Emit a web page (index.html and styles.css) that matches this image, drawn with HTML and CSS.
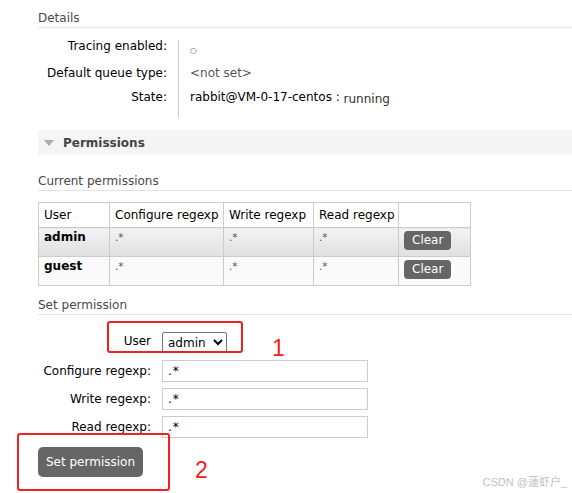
FILE: index.html
```html
<!DOCTYPE html>
<html>
<head>
<meta charset="utf-8">
<link rel="stylesheet" href="styles.css">
</head>
<body>
<div class="page">
  <h3 class="sec">Details</h3>
  <table class="details">
    <tr class="r1"><th>Tracing enabled:</th><td><span class="circle">○</span></td></tr>
    <tr class="r2"><th>Default queue type:</th><td><span class="muted">&lt;not set&gt;</span></td></tr>
    <tr class="r3"><th>State:</th><td>rabbit@VM-0-17-centos : <span class="running">running</span></td></tr>
  </table>

  <div class="bar"><span class="tri"></span><span class="bar-title">Permissions</span></div>

  <h3 class="sec sec2">Current permissions</h3>
  <table class="perms">
    <colgroup><col class="c1"><col class="c2"><col class="c3"><col class="c4"><col class="c5"></colgroup>
    <tr class="hd"><th>User</th><th>Configure regexp</th><th>Write regexp</th><th>Read regexp</th><th></th></tr>
    <tr class="odd"><td class="user">admin</td><td class="rx">.*</td><td class="rx">.*</td><td class="rx">.*</td><td><span class="btn-sm">Clear</span></td></tr>
    <tr class="even"><td class="user">guest</td><td class="rx">.*</td><td class="rx">.*</td><td class="rx">.*</td><td><span class="btn-sm">Clear</span></td></tr>
  </table>

  <h3 class="sec sec3">Set permission</h3>
  <div class="form">
    <div class="row row-user"><label>User</label><select class="sel"><option>admin</option><option>guest</option></select></div>
    <div class="row"><label>Configure regexp:</label><input class="inp" value=".*"></div>
    <div class="row"><label>Write regexp:</label><input class="inp" value=".*"></div>
    <div class="row"><label>Read regexp:</label><input class="inp" value=".*"></div>
  </div>
  <button class="btn">Set permission</button>
</div>

<div class="mark mark1"></div>
<div class="num num1">1</div>
<div class="mark mark2"></div>
<div class="num num2">2</div>
<div class="wm">CSDN @蓮虾户_</div>
</body>
</html>
```
FILE: styles.css
```css
html, body { margin: 0; padding: 0; background: #fff; }
body {
  font-family: "DejaVu Sans", Verdana, sans-serif;
  font-size: 12px;
  line-height: 14px;
  color: #000;
  width: 572px;
  height: 493px;
  overflow: hidden;
  position: relative;
}
.page { padding: 9px 0 0 38px; }
.sec {
  margin: 0;
  font-size: 12px;
  font-weight: normal;
  color: #484848;
  height: 18px;
  line-height: 18px;
  border-bottom: 1px solid #e2e2e2;
}
.details { border-collapse: collapse; margin-top: 12px; }
.details th {
  width: 129px;
  padding: 0 11px 0 0;
  text-align: right;
  font-weight: normal;
  vertical-align: top;
  white-space: nowrap;
}
.details td {
  border-left: 1px solid #ccc;
  padding: 0 0 0 11px;
  white-space: nowrap;
  vertical-align: top;
}
.details .r1 th, .details .r1 td { height: 26px; }
.details .r1 th { position: relative; top: -1px; }
.details .r2 th, .details .r2 td { height: 24px; }
.details .r3 th, .details .r3 td { height: 27px; }
.circle { color: #8a3a2a; font-size: 8px; position: relative; top: 2px; }
.muted { color: #555; }
.running { color: #333; position: relative; top: 2px; }

.bar {
  margin-top: 13px;
  height: 25px;
  background: #f5f5f5;
  display: flex;
  align-items: center;
}
.tri {
  width: 0; height: 0;
  border-left: 5px solid transparent;
  border-right: 5px solid transparent;
  border-top: 6px solid #aaa;
  margin: 1px 9px 0 6px;
}
.bar-title { font-weight: bold; color: #444; font-size: 12px; }

.sec2 { margin-top: 17px; }
.perms {
  border-collapse: collapse;
  table-layout: fixed;
  margin-top: 11px;
  width: 433px;
}
.c1 { width: 71px; }
.c2 { width: 114px; }
.c3 { width: 90px; }
.c4 { width: 85px; }
.c5 { width: 72px; }
.perms th, .perms td {
  border: 1px solid #ccc;
  text-align: left;
  padding: 0 5px;
  font-weight: normal;
  vertical-align: top;
  white-space: nowrap;
  overflow: hidden;
}
.perms .hd th { height: 24px; vertical-align: middle; background: #fff; }
.perms tr.odd td { height: 26px; padding-top: 2px; background: linear-gradient(#f3f3f3, #e0e0e0); }
.perms tr.even td { height: 26px; padding-top: 2px; background: #fafafa; }
.perms td.user { font-weight: bold; }
.perms td.rx { color: #6a4a44; font-size: 10.5px; }
.btn-sm {
  display: inline-block;
  background: #666;
  color: #fff;
  border-radius: 4px;
  padding: 2px 8px 3px;
  margin-top: 1px;
  font-size: 12px;
}

.sec3 { margin-top: 10px; }
.form { margin-top: 17px; display: flex; flex-direction: column; gap: 6px; }
.row { display: flex; align-items: center; }
.row label { width: 113px; text-align: right; padding-right: 11px; white-space: nowrap; }
.row-user { margin-bottom: 1px; }
.row-user label { position: relative; top: -2px; }
.sel {
  font-family: "DejaVu Sans", Verdana, sans-serif;
  font-size: 12px;
  height: 21px;
  box-sizing: border-box;
  width: 65px;
  border: 1px solid #767676;
  border-radius: 2px;
  background: #fff;
  color: #000;
  padding: 0 1px;
}
.inp {
  font-family: "DejaVu Sans", Verdana, sans-serif;
  font-size: 12px;
  letter-spacing: 1px;
  width: 206px;
  height: 22px;
  box-sizing: border-box;
  border: 1px solid #ccc;
  padding: 0 5px;
  margin: 0;
}
.btn {
  display: block;
  margin-top: 9px;
  background: #666;
  color: #fff;
  border: 0;
  border-radius: 5px;
  font-family: "DejaVu Sans", Verdana, sans-serif;
  font-size: 12px;
  width: 105px;
  height: 30px;
  padding: 0;
}

.mark { position: absolute; border: 2px solid #f02020; border-radius: 3px; box-sizing: border-box; }
.mark1 { left: 107px; top: 321px; width: 136px; height: 32px; }
.mark2 { left: 17px; top: 433px; width: 153px; height: 58px; }
.num { position: absolute; color: #f02020; font-family: "Liberation Sans", Arial, sans-serif; font-size: 23px; line-height: 1; }
.num1 { left: 272px; top: 337px; }
.num2 { left: 195px; top: 459px; }
.wm {
  position: absolute;
  right: 5px; bottom: 4px;
  color: #c2c2c2;
  font-family: "Liberation Sans", "Noto Sans CJK SC", sans-serif;
  font-size: 11px;
}
```
